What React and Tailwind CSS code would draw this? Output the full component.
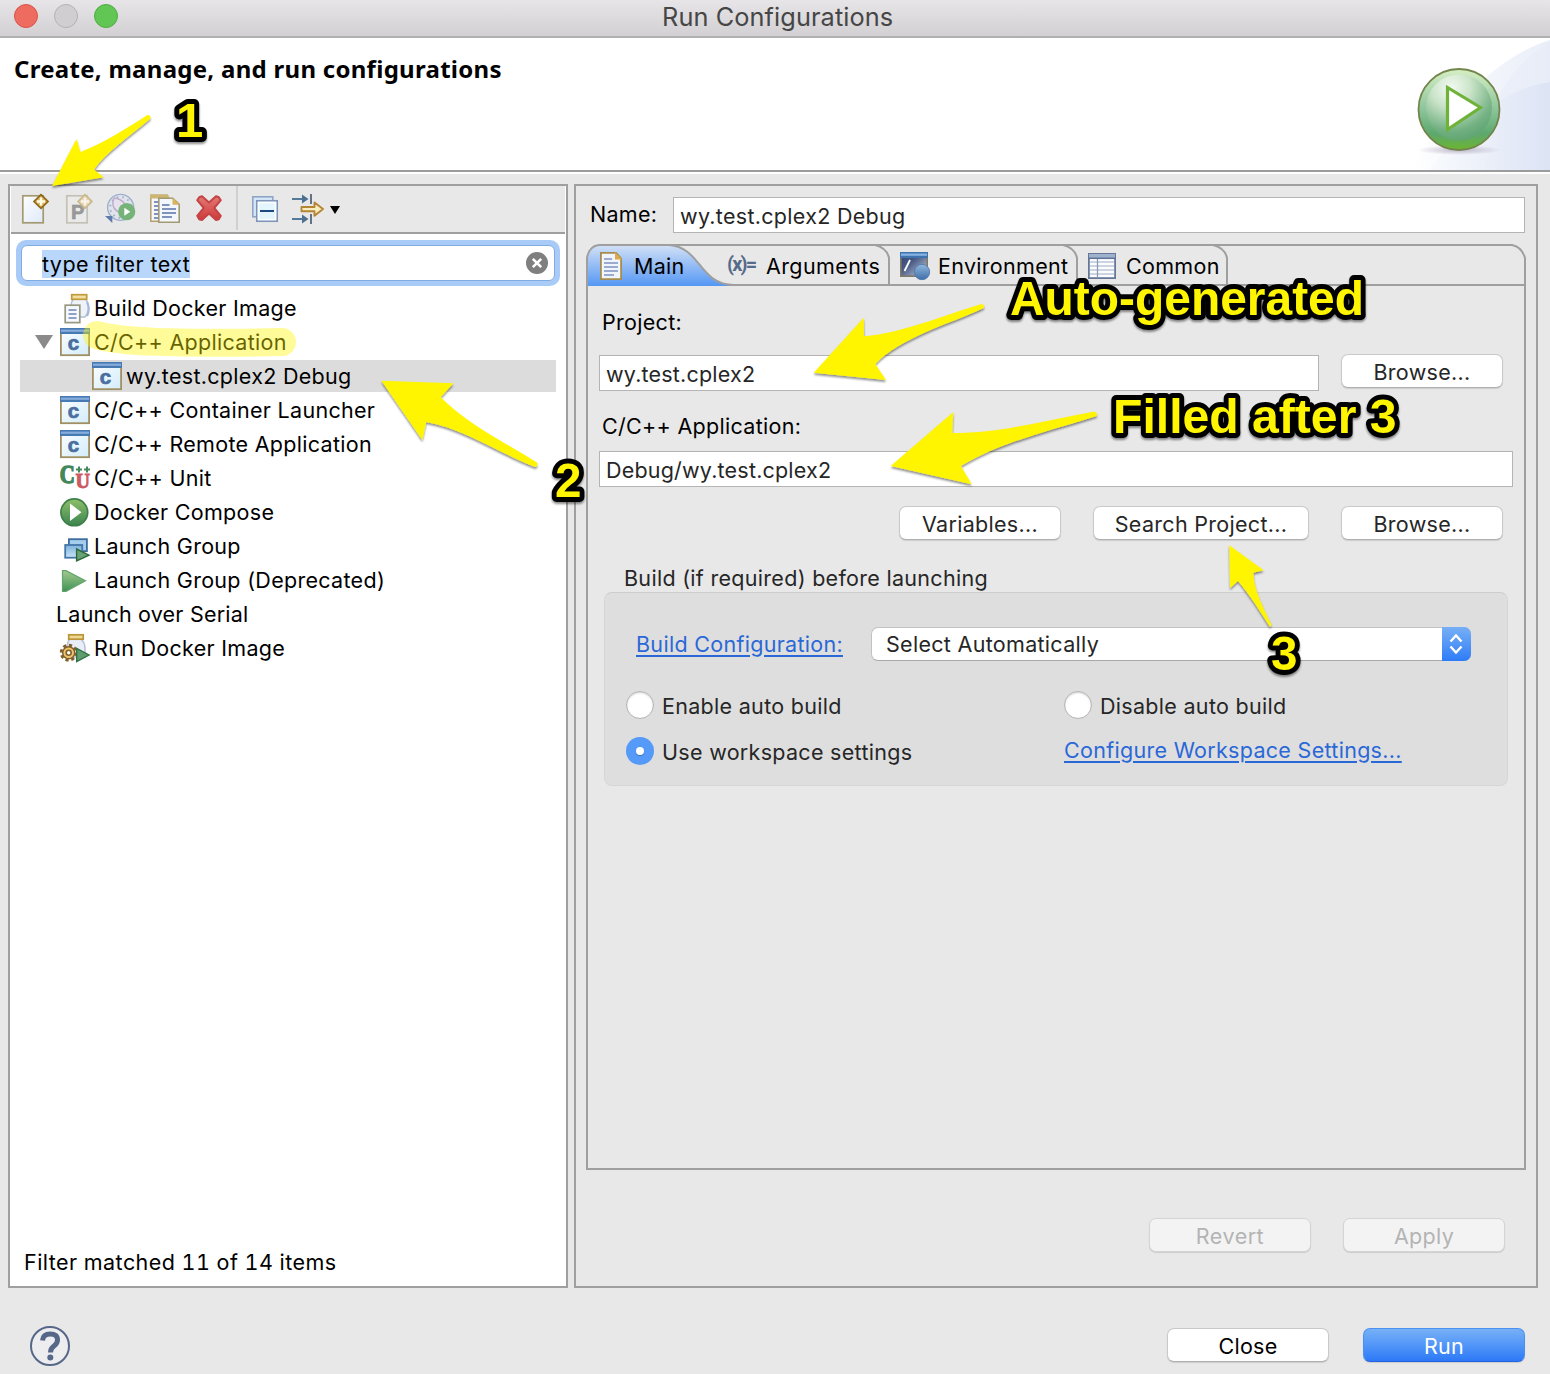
/* ---------- toolbar icons ---------- */

function NewIcon() {
  return (
    <svg className="size-8 overflow-visible" viewBox="0 0 32 32">
      <defs>
        <linearGradient id="np" x1="0" y1="0" x2="1" y2="1">
          <stop offset="0" stopColor="#fdfefe" />
          <stop offset="1" stopColor="#dfe9f8" />
        </linearGradient>
      </defs>
      <rect x="4.8" y="2.8" width="20.4" height="27" fill="url(#np)" stroke="#a39a72" strokeWidth="1.7" />
      <path d="M23 1.6 30 8.5 23 15.4 16 8.5Z" fill="#d9b25c" stroke="#8d6817" strokeWidth="1.7" />
      <path d="M23 4.5v8M19 8.5h8" stroke="#fffbe8" strokeWidth="2.4" />
    </svg>
  );
}

function PrototypeIcon() {
  return (
    <svg className="size-8 overflow-visible" viewBox="0 0 32 32">
      <rect x="4.8" y="2.8" width="20.4" height="27" fill="#eaeaea" stroke="#c4c2b6" strokeWidth="1.7" />
      <text x="9" y="26.3" fontFamily="Liberation Sans" fontWeight="700" fontSize="20" fill="#9a9a9a" stroke="#8a8a8a" strokeWidth=".5">P</text>
      <path d="M23 1.6 30 8.5 23 15.4 16 8.5Z" fill="#e4d5b2" stroke="#cbb98c" strokeWidth="1.6" />
      <path d="M23 4.5v8M19 8.5h8" stroke="#f7f3e8" strokeWidth="2.4" />
    </svg>
  );
}

function ExportIcon() {
  return (
    <svg className="size-8 overflow-visible" viewBox="0 0 32 32">
      <circle cx="14.6" cy="14.4" r="13" fill="#e0e3ea" stroke="#9fb0cc" strokeWidth="1.4" />
      <circle cx="14.6" cy="14.4" r="10.4" fill="none" stroke="#a3b3cf" strokeWidth="2" strokeDasharray="1.6 4" />
      <path d="M8 5c-3 8 0 14 11 16M8 5c8 1 13 5 12 15" fill="#e6e1ec" stroke="#b9abcc" strokeWidth="1.4" />
      <path d="M-1 23h7.3v7Z" fill="#5f7bab" />
      <circle cx="20.7" cy="18.7" r="8.6" fill="#76b379" />
      <path d="M18.3 14.7v8l6-4Z" fill="#fff" />
    </svg>
  );
}

function DuplicateIcon() {
  return (
    <svg className="size-8 overflow-visible" viewBox="0 0 32 32">
      <path d="M.8 2.3h16v26h-16Z" fill="#f4f6fb" stroke="#b3a068" strokeWidth="1.5" />
      <path d="M0 1.5h18l2 4H0Z" fill="#cdb671" />
      <path d="M4 9h4M4 13h4M4 17h4M4 21h4M4 25h4" stroke="#5c72a6" strokeWidth="1.7" />
      <path d="M8.8 5.3h14l6.4 6v18H8.8Z" fill="#f2f6fd" stroke="#a39a72" strokeWidth="1.6" />
      <path d="M22.5 4.6v7.2h7.2Z" fill="#d9b55c" />
      <path d="M12 12h7.500M12 16h14M12 20h14M12 24h10" stroke="#5c72a6" strokeWidth="1.7" />
    </svg>
  );
}

function DeleteIcon() {
  return (
    <svg className="size-8 overflow-visible" viewBox="0 0 32 32">
      <defs>
        <linearGradient id="dx" x1="0" y1="0" x2="0" y2="1">
          <stop offset="0" stopColor="#e27a76" />
          <stop offset="1" stopColor="#cf3a3a" />
        </linearGradient>
      </defs>
      <path
        d="M5.2 4.2 8 3.2 15 9.6 22 3.2 24.800 4.2 26.800 7.2 20.200 15 26.800 22.800 24.800 26.200 22 27 15 20.600 8 27 5.200 26.200 3.200 22.800 9.800 15 3.200 7.2Z"
        fill="url(#dx)"
        stroke="#c54343"
        strokeWidth="2"
        strokeLinejoin="round"
      />
    </svg>
  );
}

function CollapseIcon() {
  return (
    <svg className="size-8 overflow-visible" viewBox="0 0 32 32">
      <rect x="2.8" y="3.8" width="20" height="20" fill="#d5e8f8" stroke="#8fa5c8" strokeWidth="1.6" />
      <rect x="6.8" y="7.8" width="20.4" height="20.4" fill="#e4f6fd" stroke="#8094b8" strokeWidth="1.7" />
      <rect x="8.5" y="9.5" width="17" height="17" fill="none" stroke="#fbfeff" strokeWidth="1.5" />
      <path d="M10 18h14" stroke="#1c4a80" strokeWidth="2" />
    </svg>
  );
}

function FilterIcon() {
  return (
    <svg className="size-8 overflow-visible" viewBox="0 0 32 32">
      <g fill="none" stroke="#55799a" strokeWidth="1.900">
        <path d="M0 6h15M0 26h15" />
        <path d="M19 1v10M19 21v10" stroke="#5a6f82" />
      </g>
      <path d="M10 1.5 16.5 6 10 10.5ZM10 21.5 16.5 26 10 30.5Z" fill="#4c7090" />
      <path d="M9.5 14h13V9.500L31 16l-8.500 6.800v-4.600h-13Z" fill="#f9eec0" stroke="#b58534" strokeWidth="1.900" strokeLinejoin="round" />
    </svg>
  );
}

/* ---------- tree icons ---------- */

function AppIcon() {
  return (
    <svg className="size-[30px] shrink-0 overflow-visible" viewBox="0 0 30 30">
      <defs>
        <linearGradient id="ai" x1="0" y1="0" x2="1" y2="1">
          <stop offset="0" stopColor="#fbfeff" />
          <stop offset="1" stopColor="#d3ecfa" />
        </linearGradient>
      </defs>
      <rect x="0.9" y="1.9" width="28.2" height="26.3" fill="url(#ai)" stroke="#a08f62" strokeWidth="1.8" />
      <rect x="0" y="1" width="30" height="6" fill="#4779b2" />
      <rect x="1" y="2.6" width="28" height="2.2" fill="#86addb" />
      <text x="7.8" y="23" fontFamily="Liberation Sans" fontWeight="700" fontSize="20.5" fill="#4a6f9f" stroke="#4a6f9f" strokeWidth=".7">c</text>
    </svg>
  );
}

function BuildDockerIcon() {
  return (
    <svg className="size-[30px] shrink-0 overflow-visible" viewBox="0 0 30 30">
      <path d="M14 6Q11 8 11 14v10h14q4-5 3.500-10-.5-6-3.500-8Z" fill="#eef2f9" stroke="#b4c0d8" strokeWidth="1.5" />
      <path d="M27 9q3.500 7 0 14" stroke="#a9b8d6" strokeWidth="2.2" fill="none" />
      <rect x="11.7" y="1.7" width="15" height="4.6" fill="#f1dfa0" stroke="#c09a3c" strokeWidth="1.7" />
      <rect x="5.2" y="12.2" width="14.600" height="17.400" fill="#f5f8fe" stroke="#98977f" strokeWidth="1.7" />
      <path d="M8.500 17h8M8.500 21h8M8.500 25h8" stroke="#7084b4" strokeWidth="1.7" />
    </svg>
  );
}

function UnitIcon() {
  return (
    <svg className="size-[30px] shrink-0 overflow-visible tracking-normal" viewBox="0 0 30 30">
      <text x="-0.3" y="20" fontFamily="Liberation Serif" fontWeight="700" fontSize="26" textLength="15" lengthAdjust="spacingAndGlyphs" fill="#43875a" stroke="#43875a" strokeWidth="1.5">C</text>
      <path d="M16 6.500h6M19 3.500v6M24 6.500h6M27 3.500v6" stroke="#43875a" strokeWidth="2" />
      <text x="15.500" y="24.700" fontFamily="Liberation Serif" fontWeight="700" fontSize="20" textLength="14.500" lengthAdjust="spacingAndGlyphs" fill="#cb5a62" stroke="#cb5a62" strokeWidth=".9">U</text>
    </svg>
  );
}

function ComposeIcon() {
  return (
    <svg className="size-[30px] shrink-0 overflow-visible" viewBox="0 0 30 30">
      <defs>
        <linearGradient id="ci" x1="0" y1="0" x2="0" y2="1">
          <stop offset="0" stopColor="#8fc069" />
          <stop offset="1" stopColor="#3c8450" />
        </linearGradient>
      </defs>
      <circle cx="14.3" cy="15.3" r="13.4" fill="url(#ci)" stroke="#3f8048" strokeWidth="1.7" />
      <path d="M10 6.500v17.500L21.500 15.300Z" fill="#fff" />
    </svg>
  );
}

function GroupIcon() {
  return (
    <svg className="size-[30px] shrink-0 overflow-visible" viewBox="0 0 30 30">
      <defs>
        <linearGradient id="gi" x1="0" y1="0" x2="0" y2="1">
          <stop offset="0" stopColor="#7db2dd" />
          <stop offset="1" stopColor="#c8e4f6" />
        </linearGradient>
      </defs>
      <rect x="8.9" y="8.2" width="18" height="12" fill="#a5cdec" stroke="#3d6c9f" strokeWidth="1.8" />
      <rect x="5.2" y="14" width="17" height="12.700" fill="url(#gi)" stroke="#4576a9" strokeWidth="1.8" />
      <path d="M16.600 18v12L29 24.200Z" fill="#69a276" stroke="#2c6a3c" strokeWidth="1.4" />
    </svg>
  );
}

function DeprecatedIcon() {
  return (
    <svg className="size-[30px] shrink-0 overflow-visible" viewBox="0 0 30 30">
      <defs>
        <linearGradient id="di" x1="0" y1="0" x2="0" y2="1">
          <stop offset="0" stopColor="#a4c98f" />
          <stop offset="1" stopColor="#3f9253" />
        </linearGradient>
      </defs>
      <path d="M2.500 5.600H6L25.500 15.800 6 26.500H2.500Z" fill="url(#di)" stroke="#64a46e" strokeWidth="1.2" />
    </svg>
  );
}

function RunDockerIcon() {
  return (
    <svg className="size-[30px] shrink-0 overflow-visible" viewBox="0 0 30 30">
      <path d="M10 6Q7 9 7 15v9h18V15q0-5-4-9Z" fill="#e9eff8" stroke="#b4c0d8" strokeWidth="1.5" />
      <rect x="8.700" y="1.800" width="14.500" height="4.400" fill="#eed893" stroke="#bb9538" strokeWidth="1.7" />
      <circle cx="8.700" cy="19.700" r="7.200" fill="none" stroke="#82602e" strokeWidth="3.400" strokeDasharray="3.100 2.550" />
      <circle cx="8.700" cy="19.700" r="6" fill="#f0c66c" stroke="#82602e" strokeWidth="1.500" />
      <circle cx="8.700" cy="19.700" r="2.500" fill="#fff" stroke="#82602e" strokeWidth="1.600" />
      <path d="M16.700 15.500v13L29 22Z" fill="#5f9d6f" stroke="#2f7442" strokeWidth="1.400" />
    </svg>
  );
}

/* ---------- tab icons ---------- */

function PageIcon() {
  return (
    <svg className="h-7 w-[22px] shrink-0 overflow-visible" viewBox="0 0 22 28">
      <path d="M.9.900H16l5.100 5.600v20.600H.9Z" fill="#f0f5fd" stroke="#a78d4b" strokeWidth="1.800" />
      <path d="M15 0v7.500h7Z" fill="#dca94c" />
      <path d="M4 7h8M4 11h14M4 15h14M4 19h14M4 23h10" stroke="#7f93c0" strokeWidth="1.600" />
    </svg>
  );
}

function EnvironmentIcon() {
  return (
    <svg className="h-7 w-[30px] shrink-0 overflow-visible" viewBox="0 0 30 28">
      <defs>
        <linearGradient id="ev" x1="0" y1="0" x2="1" y2="1">
          <stop offset="0" stopColor="#2f4270" />
          <stop offset=".4" stopColor="#4a5b84" />
          <stop offset="1" stopColor="#c9d3e6" />
        </linearGradient>
        <linearGradient id="eb" x1="0" y1="0" x2="0" y2="1">
          <stop offset="0" stopColor="#92b8dd" />
          <stop offset="1" stopColor="#3f6ea8" />
        </linearGradient>
      </defs>
      <rect x=".8" y=".8" width="26.400" height="23.400" fill="url(#ev)" stroke="#7f7a68" strokeWidth="1.600" />
      <rect x="0" y="0" width="28" height="6" fill="#3f73ae" />
      <rect x="1" y="1.500" width="26" height="2.300" fill="#86b4e2" />
      <path d="M4.500 19 10 8" stroke="#fff" strokeWidth="1.800" />
      <circle cx="22" cy="20" r="7.700" fill="url(#eb)" stroke="#4a74a8" strokeWidth=".8" />
    </svg>
  );
}

function CommonIcon() {
  return (
    <svg className="h-[26px] w-7 shrink-0 overflow-visible" viewBox="0 0 28 26">
      <rect x=".9" y=".9" width="26.200" height="24.200" fill="#fbfcfd" stroke="#66779a" strokeWidth="1.800" />
      <rect x="1" y="1" width="26" height="4" fill="#9fb2cc" />
      <path d="M2 9h24M2 13h24M2 17h24M2 21h24" stroke="#bcc6d6" strokeWidth="1.500" />
      <path d="M9.500 5v20" stroke="#8b99b4" strokeWidth="1.300" />
      <path d="M0 5.300h28" stroke="#5f7298" strokeWidth="1.500" />
    </svg>
  );
}

/* ---------- controls ---------- */

function Button({ children, className = "" }) {
  return (
    <button
      className={
        "flex h-[34px] shrink-0 items-center justify-center rounded-[7px] border border-[#c9c9c9] border-b-[#b0b0b0] bg-white pt-[2px] whitespace-nowrap shadow-[0_1px_1px_rgba(0,0,0,0.12)] " +
        className
      }
    >
      {children}
    </button>
  );
}

function Field({ children, className = "" }) {
  return (
    <div className={"flex h-9 items-center border border-[#b4b4b4] bg-white pt-[2px] pl-[6px] tracking-[0.2px] whitespace-nowrap text-[#262626] " + className}>
      {children}
    </div>
  );
}

function Radio({ checked }) {
  return checked ? (
    <span className="flex size-7 shrink-0 items-center justify-center rounded-full bg-[#559af8]">
      <span className="size-2 rounded-full bg-white shadow-[0_1px_1px_rgba(0,0,0,0.25)]" />
    </span>
  ) : (
    <span className="size-7 shrink-0 rounded-full border border-[#b3b3b3] bg-white shadow-[inset_0_1px_2px_rgba(0,0,0,0.18)]" />
  );
}

const rows = [
  { label: "Build Docker Image", icon: BuildDockerIcon },
  { label: "C/C++ Application", icon: AppIcon, open: true },
  { label: "wy.test.cplex2 Debug", icon: AppIcon, child: true },
  { label: "C/C++ Container Launcher", icon: AppIcon },
  { label: "C/C++ Remote Application", icon: AppIcon },
  { label: "C/C++ Unit", icon: UnitIcon },
  { label: "Docker Compose", icon: ComposeIcon },
  { label: "Launch Group", icon: GroupIcon },
  { label: "Launch Group (Deprecated)", icon: DeprecatedIcon },
  { label: "Launch over Serial" },
  { label: "Run Docker Image", icon: RunDockerIcon },
];

function TreeRow({ row }) {
  const Icon = row.icon;
  const indent = row.child
    ? "pl-[72px] bg-[linear-gradient(#dcdcdc,#dcdcdc)] bg-[length:100%_32px] bg-[position:0_1px] bg-no-repeat"
    : row.icon
      ? "pl-[40px]"
      : "pl-[36px]";
  return (
    <div className={"flex h-[34px] items-center " + indent}>
      {row.open && (
        <svg className="mr-[7px] -ml-[25px] h-[14px] w-[18px]" viewBox="0 0 18 14">
          <path d="M0 0h18L9 14Z" fill="#8a8a8a" />
        </svg>
      )}
      {Icon && <Icon />}
      <span className={"whitespace-nowrap " + (Icon ? "ml-1" : "tracking-[0.2px]")}>{row.label}</span>
    </div>
  );
}

function Annotations() {
  return (
    <svg className="pointer-events-none absolute inset-0 h-[1374px] w-[1550px] tracking-normal" viewBox="0 0 1550 1374">
      <defs>
        <filter id="sh" x="-10%" y="-10%" width="120%" height="130%">
          <feDropShadow dx="0" dy="2" stdDeviation="1.3" floodColor="#000" floodOpacity=".45" />
        </filter>
      </defs>
      <path d="M97 335C120 342 170 344 282 342" fill="none" stroke="#fff500" strokeOpacity=".4" strokeWidth="28" strokeLinecap="round" />
      <g fill="#fff500" filter="url(#sh)">
        <path d="M52 186 76.500 139 80.500 152C104 143 127 128 147.500 115Q151 115 150.500 118.500C128 138 107 151 94 169.500L103.700 177.300Z" />
        <path d="M381.300 380.700 453.500 383.300 440.700 397.300C467 424 504 442 537 462.500Q538.500 466.500 535 467C499 453 462 428 426.300 422L422.300 440Z" />
        <path d="M813.700 372.700 863.700 317.700 864 336.300C903 333 944 315 981.500 304Q985 304.500 983.700 308C947 325 902 337 875.300 364L886 380Z" />
        <path d="M890.700 466 953.300 412 952.300 433C1001 433 1048 420 1094.500 411.500Q1098 413 1096.700 416C1050 431 1003 441 961 466L971.700 484.300Z" />
        <path d="M1229.300 545.300 1263.700 570.300 1253.300 572.700C1254 592 1264 608 1271.500 625Q1271 627 1269.500 626.300C1260 611 1249 594 1238 581L1230 588.300Z" />
      </g>
      <g
        fill="#fff500"
        stroke="#000"
        strokeWidth="10"
        strokeLinejoin="round"
        paintOrder="stroke"
        fontFamily="Liberation Sans, Arial, sans-serif"
        fontWeight="700"
        fontSize="49"
        filter="url(#sh)"
      >
        <text x="176" y="137">1</text>
        <text x="555" y="497" textLength="26.500" lengthAdjust="spacingAndGlyphs">2</text>
        <text x="1271" y="670" textLength="26.500" lengthAdjust="spacingAndGlyphs">3</text>
        <text x="1010" y="315" textLength="354" lengthAdjust="spacingAndGlyphs">Auto-generated</text>
        <text x="1113" y="433" textLength="283.500" lengthAdjust="spacingAndGlyphs">Filled after 3</text>
      </g>
    </svg>
  );
}

export default function App() {
  return (
    <div className="relative flex h-[1374px] w-[1550px] flex-col overflow-hidden bg-[#e8e8e8] font-['Inter','Liberation_Sans',sans-serif] text-[21.5px] leading-[27px] tracking-[0.3px] text-black">
      <header className="flex h-[38px] shrink-0 items-center border-b-2 border-[#b1afb1] bg-linear-to-b from-[#e7e5e7] to-[#d2d0d2] pl-[14px]">
        <div className="flex gap-4 pb-[5px]">
          <span className="size-6 rounded-full border border-[#d9544b] bg-[#ed6b5f]" />
          <span className="size-6 rounded-full border border-[#b4b2b4] bg-[#d0ced0]" />
          <span className="size-6 rounded-full border border-[#4fad43] bg-[#62c655]" />
        </div>
        <h1 className="ml-[544px] pb-[3px] text-[25.3px] tracking-[0.1px] whitespace-nowrap text-[#464646]">Run Configurations</h1>
      </header>

      <section className="relative flex h-[132px] shrink-0 justify-between bg-white">
        <svg className="absolute top-0 right-0 h-[132px] w-[150px]" viewBox="0 0 150 132">
          <defs>
            <linearGradient id="s1" x1="0" y1="0" x2="1" y2="0">
              <stop offset="0" stopColor="#ffffff" />
              <stop offset="1" stopColor="#e9eef8" />
            </linearGradient>
            <linearGradient id="s2" x1="0" y1="0" x2="1" y2="0">
              <stop offset="0" stopColor="#f8fafd" />
              <stop offset="1" stopColor="#dae2f4" />
            </linearGradient>
          </defs>
          <path d="M150 2C100 18 55 60 10 132H150Z" fill="url(#s1)" />
          <path d="M150 4C124 20 108 40 98 60L84 132H150Z" fill="#e6ecf8" opacity=".5" />
          <path d="M150 44C115 50 70 70 30 132H150Z" fill="url(#s2)" opacity=".85" />
        </svg>
        <h2 className="pt-[17px] pl-[14px] font-['Noto_Sans',sans-serif] text-[24px] font-bold tracking-[0.28px] whitespace-nowrap">
          Create, manage, and run configurations
        </h2>
        <svg className="relative mt-[27px] mr-[45px] h-[92px] w-[92px]" viewBox="0 0 92 92">
          <defs>
            <linearGradient id="r1" x1="0" y1="0" x2="0" y2="1">
              <stop offset="0" stopColor="#d7efc4" />
              <stop offset=".5" stopColor="#8cc49a" />
              <stop offset=".8" stopColor="#5da86e" />
              <stop offset="1" stopColor="#6cb52f" />
            </linearGradient>
            <radialGradient id="r2" cx=".38" cy=".22" r=".85">
              <stop offset="0" stopColor="#ffffff" />
              <stop offset=".35" stopColor="#cfe6cd" />
              <stop offset=".75" stopColor="#74b183" />
              <stop offset="1" stopColor="#5aa070" />
            </radialGradient>
            <radialGradient id="r3">
              <stop offset="0" stopColor="#9a8fa8" stopOpacity=".6" />
              <stop offset="1" stopColor="#9a8fa8" stopOpacity="0" />
            </radialGradient>
          </defs>
          <ellipse cx="46" cy="85" rx="42" ry="5" fill="url(#r3)" />
          <circle cx="46" cy="44.500" r="40.500" fill="url(#r1)" stroke="#73854a" strokeWidth="1.800" />
          <circle cx="46" cy="42.500" r="33" fill="url(#r2)" opacity=".85" />
          <path d="M34.500 22.500V64.500L67.500 42.500Z" fill="#fff" stroke="#6fb23a" strokeWidth="3.200" />
        </svg>
      </section>
      <div className="h-1 shrink-0 border-t-2 border-[#9c9c9c] bg-white" />

      <main className="flex h-[1114px] shrink-0 gap-[6px] pt-[10px] pl-2">
        <aside className="flex w-[560px] flex-col border-2 border-[#9f9f9f] bg-white">
          <div className="mx-px flex h-12 shrink-0 border-b-2 border-[#9f9f9f] bg-[#e8e8e8] pl-[7px]">
            <div className="flex gap-3 pt-[7px]">
              <NewIcon />
              <PrototypeIcon />
              <ExportIcon />
              <DuplicateIcon />
              <DeleteIcon />
            </div>
            <div className="ml-[10px] h-11 w-[2px] bg-[#d0d0d0]" />
            <div className="ml-3 flex pt-[7px]">
              <CollapseIcon />
              <span className="w-[10px]" />
              <FilterIcon />
              <svg className="mt-[13px] ml-[6px] h-2 w-[10px]" viewBox="0 0 10 8">
                <path d="M0 0h10L5 8Z" fill="#000" />
              </svg>
            </div>
          </div>

          <div className="mt-[6px] ml-[6px] h-[46px] w-[544px] shrink-0 rounded-[10px] bg-[#a9cbf8] p-[5px]">
            <div className="flex h-9 items-center justify-between rounded-[6px] border-[1.5px] border-[#82abe3] bg-white pr-[6px] pl-[20px]">
              <span className="mt-[2px] h-7 w-[148px] bg-[#b8d7fb] leading-[28px] tracking-[0.42px] whitespace-nowrap">type filter text</span>
              <svg className="size-[22px]" viewBox="0 0 22 22">
                <circle cx="11" cy="11" r="11" fill="#7f7f7f" />
                <path d="M6.800 6.800 15.200 15.200M15.200 6.800 6.800 15.200" stroke="#fff" strokeWidth="2.600" />
              </svg>
            </div>
          </div>

          <div className="mt-[5px] ml-[10px] flex w-[536px] flex-col">
            {rows.map((row) => (
              <TreeRow key={row.label} row={row} />
            ))}
          </div>
          <p className="mt-auto mb-[10px] ml-[14px] tracking-[0.45px] whitespace-nowrap tabular-nums">Filter matched 11 of 14 items</p>
        </aside>

        <section className="flex w-[964px] flex-col border-2 border-[#9f9f9f]">
          <div className="flex items-center pt-[11px] pl-[14px]">
            <span className="w-[83px] pb-[2px]">Name:</span>
            <Field className="w-[852px] tracking-[0.3px]!">wy.test.cplex2 Debug</Field>
          </div>

          <div className="mt-[11px] ml-[10px] flex h-[926px] w-[940px] flex-col">
            <nav className="relative h-[42px] shrink-0">
              <svg className="absolute inset-0 h-[42px] w-[940px]" viewBox="0 0 940 42">
                <defs>
                  <linearGradient id="mt" x1="0" y1="0" x2="0" y2="1">
                    <stop offset="0" stopColor="#d3e1f6" />
                    <stop offset="1" stopColor="#5597f4" />
                  </linearGradient>
                </defs>
                <path d="M1 42V14Q2 2 13 1H83C115 1 113 41 150 41V42Z" fill="url(#mt)" />
                <g fill="none" stroke="#9f9f9f" strokeWidth="2">
                  <path d="M1 42V14Q3 2 13 1H926Q936 3 939 14V42" />
                  <path d="M83 1C115 3 113 41 148 41H939" />
                  <path d="M289 1Q301 4 303 14V41M477 1Q489 4 491 14V41M627 1Q639 4 641 14V41" />
                </g>
              </svg>
              <div className="relative flex h-[42px] items-center pt-[2px]">
                <div className="flex w-[139px] items-center pl-[14px]">
                  <PageIcon />
                  <span className="ml-3">Main</span>
                </div>
                <div className="flex w-[165px] items-center pl-[2px]">
                  <span className="w-[32px] pb-1 font-['Roboto'] text-[20px] font-bold tracking-[-1.8px] text-[#566a8a]">(x)=</span>
                  <span className="ml-[7px] tracking-[0.4px]">Arguments</span>
                </div>
                <div className="flex w-[188px] items-center pl-[10px]">
                  <EnvironmentIcon />
                  <span className="ml-2">Environment</span>
                </div>
                <div className="flex w-[150px] items-center pl-[10px]">
                  <CommonIcon />
                  <span className="ml-[10px]">Common</span>
                </div>
              </div>
            </nav>

            <div className="flex flex-1 flex-col border-x-2 border-b-2 border-[#9f9f9f] pt-[23px]">
              <span className="ml-[14px]">Project:</span>
              <div className="mt-[18px] ml-[11px] flex h-[37px] gap-[22px]">
                <Field className="mt-px w-[720px]">wy.test.cplex2</Field>
                <Button className="w-[162px] text-[#262626]">Browse...</Button>
              </div>
              <span className="mt-[22px] ml-[14px]">C/C++ Application:</span>
              <Field className="mt-[11px] ml-[11px] w-[914px]">Debug/wy.test.cplex2</Field>
              <div className="mt-[19px] ml-[311px] flex h-[35px] gap-8 text-[#262626]">
                <Button className="w-[162px]">Variables...</Button>
                <Button className="w-[216px]">Search Project...</Button>
                <Button className="w-[162px]">Browse...</Button>
              </div>
              <span className="mt-6 ml-9 text-[#262626]">Build (if required) before launching</span>

              <div className="ml-4 flex h-[194px] w-[904px] flex-col rounded-[8px] border border-[#d6d6d6] border-t-[#cdcdcd] bg-[#dedede] pt-[34px] text-[#262626]">
                <div className="flex h-[34px] items-center pl-[31px]">
                  <div className="w-[235px]">
                    <a className="whitespace-nowrap text-[#2a68d8] underline decoration-2 underline-offset-[3px]">Build Configuration:</a>
                  </div>
                  <div className="flex h-[34px] w-[600px] items-center justify-between rounded-[7px] border border-[#c2c2c2] border-b-[#a9a9a9] bg-white pl-[14px]">
                    <span>Select Automatically</span>
                    <span className="-my-px -mr-px flex h-[34px] w-[29px] items-center justify-center rounded-r-[7px] bg-linear-to-b from-[#76aff5] to-[#2d7bf7]">
                      <svg className="mr-px h-5 w-[14px]" viewBox="0 0 14 20">
                        <path d="M1.500 7.500 7 1.500l5.500 6M1.500 12.500 7 18.500l5.500-6" fill="none" stroke="#fff" strokeWidth="2.400" />
                      </svg>
                    </span>
                  </div>
                </div>
                <div className="mt-[30px] flex h-7 items-center pl-[21px]">
                  <div className="flex w-[438px] items-center gap-2">
                    <Radio />
                    <span className="pt-[2px]">Enable auto build</span>
                  </div>
                  <div className="flex items-center gap-2">
                    <Radio />
                    <span className="pt-[2px]">Disable auto build</span>
                  </div>
                </div>
                <div className="mt-[18px] flex h-7 items-center pl-[21px]">
                  <div className="flex w-[438px] items-center gap-2">
                    <Radio checked />
                    <span className="pt-[2px]">Use workspace settings</span>
                  </div>
                  <a className="pb-[2px] whitespace-nowrap text-[#2a68d8] underline decoration-2 underline-offset-[3px]">Configure Workspace Settings...</a>
                </div>
              </div>
            </div>
          </div>

          <div className="mt-12 flex justify-end gap-8 pr-[31px] text-[#b4b4b4]">
            <Button className="w-[162px] border-[#d4d4d4]! bg-[#f3f3f3]! tracking-[0.5px]">Revert</Button>
            <Button className="w-[162px] border-[#d4d4d4]! bg-[#f3f3f3]!">Apply</Button>
          </div>
        </section>
      </main>

      <footer className="flex flex-1 items-start justify-between pr-[25px] pl-[30px]">
        <svg className="mt-[38px] size-10" viewBox="0 0 40 40">
          <circle cx="20" cy="20" r="19" fill="#ededf0" stroke="#566788" strokeWidth="2" />
          <path d="M12.500 14.500Q13 8 20.300 8T27.500 14Q27.500 17.500 24 20T20.500 26.500" fill="none" stroke="#566788" strokeWidth="5" />
          <circle cx="20.300" cy="31.500" r="3" fill="#566788" />
        </svg>
        <div className="flex gap-[34px] pt-10">
          <Button className="w-[162px]">Close</Button>
          <Button className="w-[162px] border-[#4a90f3]! border-b-[#2463e0]! bg-linear-to-b from-[#76b0f6] to-[#2c79f7] text-white">Run</Button>
        </div>
      </footer>

      <Annotations />
    </div>
  );
}
